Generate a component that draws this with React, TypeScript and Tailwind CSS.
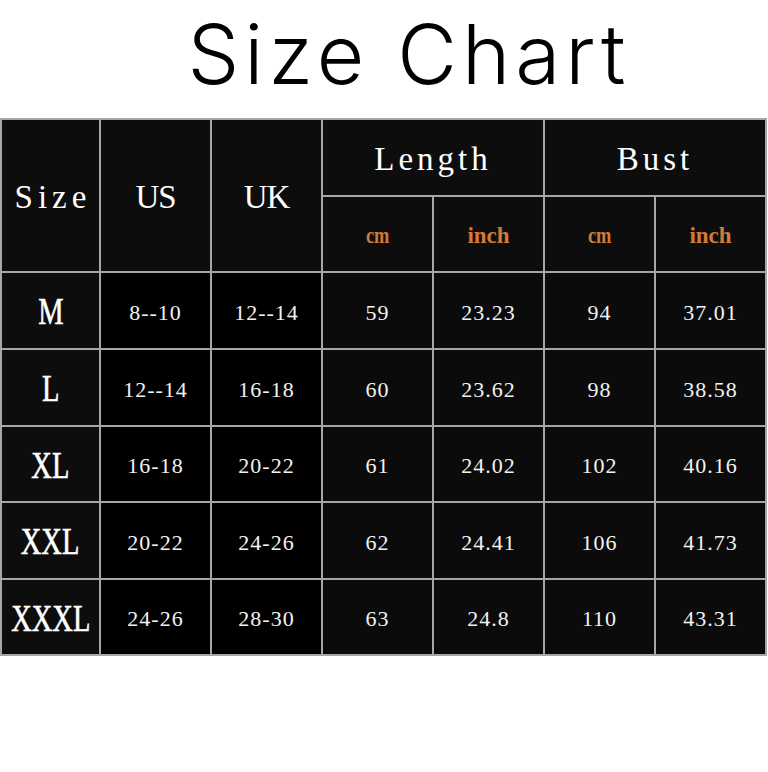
import React from "react";

const rows = [
  ["M", "8--10", "12--14", "59", "23.23", "94", "37.01"],
  ["L", "12--14", "16-18", "60", "23.62", "98", "38.58"],
  ["XL", "16-18", "20-22", "61", "24.02", "102", "40.16"],
  ["XXL", "20-22", "24-26", "62", "24.41", "106", "41.73"],
  ["XXXL", "24-26", "28-30", "63", "24.8", "110", "43.31"],
];

const serif = "font-['Liberation_Serif',serif]";

export default function App() {
  return (
    <div className="w-[768px] h-[772px] bg-white">
      <div className="h-[118px] flex items-center justify-center pl-[50px]">
        <div className="font-['Inter',sans-serif] font-light text-[82px] tracking-[5px] text-black leading-none pb-[8px]">
          Size Chart
        </div>
      </div>
      <div className="w-[767px] grid grid-cols-[97px_repeat(6,109px)] grid-rows-[75px_74px_75px_75px_74px_75px_74px] gap-[2px] p-[2px] bg-[#a6a6a6]">
        <div className={`row-span-2 bg-[#0d0d0d] flex items-center justify-center text-white text-[33px] tracking-[5px] pl-[5px] pt-[4px] ${serif}`}>
          Size
        </div>
        <div className={`row-span-2 bg-[#0d0d0d] flex items-center justify-center text-white text-[33px] tracking-[-1px] pt-[4px] ${serif}`}>
          US
        </div>
        <div className={`row-span-2 bg-[#0d0d0d] flex items-center justify-center text-white text-[33px] tracking-[-1px] pt-[4px] ${serif}`}>
          UK
        </div>
        <div className={`col-span-2 bg-[#0d0d0d] flex items-center justify-center text-white text-[33px] tracking-[4px] pt-[5px] ${serif}`}>
          Length
        </div>
        <div className={`col-span-2 bg-[#0d0d0d] flex items-center justify-center text-white text-[33px] tracking-[4px] pt-[5px] ${serif}`}>
          Bust
        </div>
        {["cm", "inch", "cm", "inch"].map((u, i) => (
          <div
            key={i}
            className={`bg-[#0d0d0d] flex items-center justify-center text-[#d57a36] pt-[4px] ${serif}`}
          >
            <span className={`inline-block text-[23px] font-bold ${u === "cm" ? "scale-x-[0.8]" : ""}`}>{u}</span>
          </div>
        ))}
        {rows.map((r, ri) => (
          <React.Fragment key={ri}>
            <div className="bg-[#0d0d0d] flex items-center justify-center text-white pt-[2px]">
              <span className={`inline-block text-[38px] scale-x-[0.75] [-webkit-text-stroke:0.6px_white] ${serif}`}>{r[0]}</span>
            </div>
            {r.slice(1).map((v, ci) => (
              <div
                key={ci}
                className={`${ci < 2 ? "bg-black" : "bg-[#0b0b0b]"} flex items-center justify-center text-[#f2f2f2] text-[22px] tracking-[1px] pt-[3px] ${serif}`}
              >
                {v}
              </div>
            ))}
          </React.Fragment>
        ))}
      </div>
    </div>
  );
}
